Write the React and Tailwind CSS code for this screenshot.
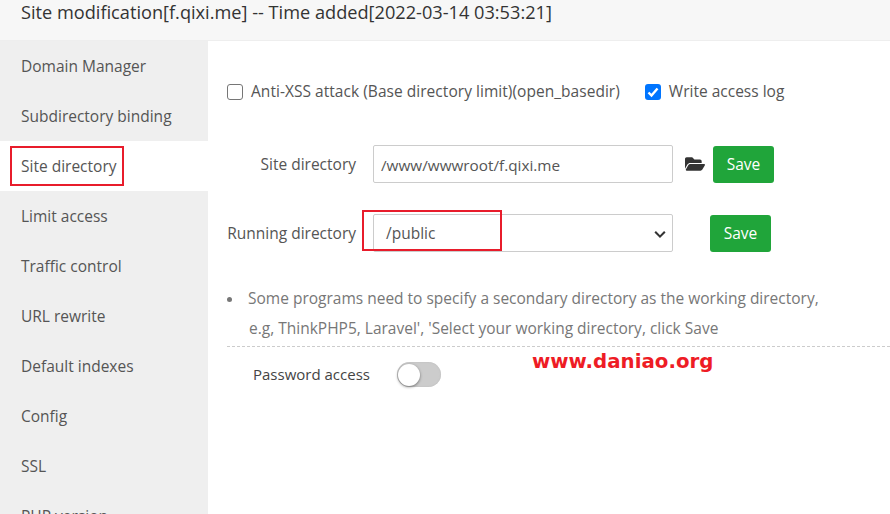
import React from "react";
import { FaFolderOpen } from "react-icons/fa";

const menu = [
  "Domain Manager",
  "Subdirectory binding",
  "Site directory",
  "Limit access",
  "Traffic control",
  "URL rewrite",
  "Default indexes",
  "Config",
  "SSL",
  "PHP version",
];

function SaveButton() {
  return (
    <button className="h-[37px] w-[61px] rounded-[3px] bg-[#20a53a] pt-[2px] text-[15.5px] text-white">
      Save
    </button>
  );
}

export default function App() {
  return (
    <div className="relative h-[514px] w-[890px] overflow-hidden bg-white font-['Open_Sans',sans-serif] text-[15.5px] text-[#555]">
      <div className="flex h-[41px] items-center border-b border-[#eee] bg-[#f7f7f7] pb-[14px] pl-[21px] text-[18.18px] text-[#333]">
        Site modification[f.qixi.me] -- Time added[2022-03-14 03:53:21]
      </div>

      <div className="flex">
        {/* Side menu */}
        <div className="h-[473px] w-[208px] shrink-0 overflow-hidden bg-[#efefef]">
          {menu.map((item) => (
            <div
              key={item}
              className={
                "flex h-[50px] shrink-0 items-center pl-[21px] pt-[2px] " +
                (item === "Site directory" ? "bg-white" : "")
              }
            >
              {item}
            </div>
          ))}
        </div>

        <div className="flex-1">
          <div className="mt-[39px] flex h-[23px] items-center pl-[19px]">
            <span className="h-4 w-4 rounded-[3px] border border-[#767676] bg-white" />
            <span className="ml-[8px] tracking-[0.04px]">Anti-XSS attack (Base directory limit)(open_basedir)</span>
            <span className="ml-[25px] flex h-4 w-4 items-center justify-center rounded-[3px] bg-[#0075ff]">
              <svg viewBox="0 0 16 16" className="h-4 w-4" fill="none" stroke="white" strokeWidth="2.4">
                <path d="M3.5 8.5 L6.5 11.5 L12.5 4.5" />
              </svg>
            </span>
            <span className="ml-[8px]">Write access log</span>
          </div>

          <div className="mt-[42px] flex items-center">
            <div className="w-[148px] pt-[2px] text-right">Site directory</div>
            <div className="ml-[17px] flex h-[38px] w-[300px] items-center rounded-[2px] border border-[#ccc] pl-[7px] pt-[2px] text-[15.3px]">
              /www/wwwroot/f.qixi.me
            </div>
            <FaFolderOpen className="ml-[12px] text-[20px] text-[#333]" />
            <div className="ml-[8px]">
              <SaveButton />
            </div>
          </div>

          <div className="mt-[31px] flex items-center">
            <div className="w-[148px] pt-[2px] text-right">Running directory</div>
            <div className="ml-[17px] flex h-[38px] w-[300px] items-center justify-between rounded-[2px] border border-[#ccc] pl-[12px] pr-[5px] pt-[2px]">
              /public
              <svg viewBox="0 0 16 16" className="h-[14px] w-[14px]" fill="none" stroke="#333" strokeWidth="2.4">
                <path d="M2.5 5.5 L8 11 L13.5 5.5" />
              </svg>
            </div>
            <div className="ml-[37px]">
              <SaveButton />
            </div>
          </div>

          <ul className="mt-[31px] pl-[19px] text-[#777]">
            <li className="flex h-[30px] items-center pt-[2px]">
              <span className="h-[5px] w-[5px] rounded-full bg-[#777]" />
              <span className="ml-[16px]">Some programs need to specify a secondary directory as the working directory,</span>
            </li>
            <li className="flex h-[30px] items-center pl-[22px] pt-[2px]">
              e.g, ThinkPHP5, Laravel', 'Select your working directory, click Save
            </li>
          </ul>

          <div className="ml-[19px] mt-[3px] border-t border-dashed border-[#ccc]" />

          <div className="mt-[15px] flex items-center pl-[45px]">
            <span className="text-[15px] text-[#444]">Password access</span>
            <span className="ml-[27px] flex h-[25px] w-[44px] items-center rounded-full bg-[#ccc] shadow-[inset_0_0_2px_#bbb]">
              <span className="ml-[1px] h-[22px] w-[22px] rounded-full bg-white shadow-[0_1px_3px_rgba(0,0,0,0.45)]" />
            </span>
          </div>
        </div>
      </div>

      {/* Red annotations added over the screenshot */}
      <div className="absolute left-[10px] top-[146px] h-[40px] w-[114px] border-2 border-[#e81c2b]" />
      <div className="absolute left-[362px] top-[210px] h-[41px] w-[140px] border-2 border-[#e81c2b]" />
      <div className="absolute left-[532px] top-[347px] font-['DejaVu_Sans',sans-serif] text-[19.8px] font-bold leading-[30px] text-[#ee1c25]">
        www.daniao.org
      </div>
    </div>
  );
}
